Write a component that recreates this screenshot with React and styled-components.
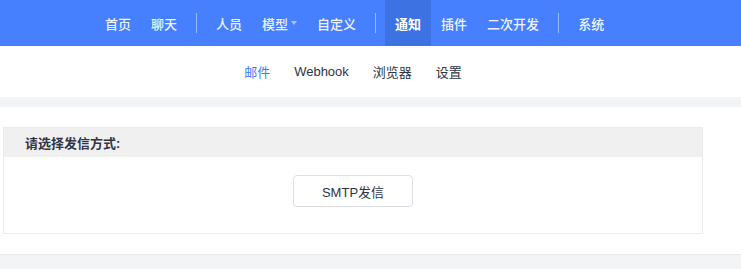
import React from "react";
import styled, { createGlobalStyle } from "styled-components";

const Global = createGlobalStyle`
  html, body { margin: 0; padding: 0; background: #ffffff; }
  body {
    font-family: "Liberation Sans", "Noto Sans CJK SC", Arial, sans-serif;
    font-size: 13px;
    color: #303445;
  }
`;

const Header = styled.header`
  background: #4680fe;
  height: 46px;
`;

const Nav = styled.nav`
  width: 706px;
  height: 100%;
  display: flex;
  align-items: stretch;
  padding-left: 95px;
  box-sizing: border-box;
`;

const NavItem = styled.a`
  display: flex;
  align-items: center;
  padding: 0 10px;
  font-size: 13px;
  color: ${(p) => (p.$active ? "#ffffff" : "rgba(255,255,255,0.93)")};
  font-weight: ${(p) => (p.$active ? 700 : 500)};
  background: ${(p) => (p.$active ? "#3c72e2" : "transparent")};
  cursor: pointer;
  white-space: nowrap;
`;

const Caret = styled.span`
  display: inline-block;
  width: 0;
  height: 0;
  margin-left: 3px;
  border-left: 3.5px solid transparent;
  border-right: 3.5px solid transparent;
  border-top: 4px solid rgba(255, 255, 255, 0.55);
`;

const Divider = styled.span`
  align-self: center;
  width: 1px;
  height: 20px;
  margin: 0 9px 1px 9px;
  background: rgba(255, 255, 255, 0.45);
`;

const SubNav = styled.div`
  width: 706px;
  height: 51px;
  display: flex;
  align-items: center;
  justify-content: center;
  gap: 24px;
`;

const SubItem = styled.a`
  font-size: 13px;
  color: ${(p) => (p.$active ? "#3f7cf4" : "#303445")};
  cursor: pointer;
`;

const Band = styled.div`
  height: ${(p) => p.$h}px;
  background: #f3f4f6;
  border-top: ${(p) => (p.$line ? "1px solid #e6e7ea" : "none")};
`;

const Content = styled.main`
  padding: 20px 0 20px 3px;
`;

const Card = styled.section`
  width: 700px;
  box-sizing: border-box;
  border: 1px solid #ebebeb;
`;

const CardHead = styled.div`
  height: 29px;
  background: #f0f0f0;
  display: flex;
  align-items: center;
  padding-left: 21px;
  font-weight: 700;
  font-size: 13px;
  color: #303445;
`;

const CardBody = styled.div`
  display: flex;
  justify-content: center;
  padding: 18px 0 26px;
`;

const Button = styled.button`
  width: 120px;
  height: 32px;
  border: 1px solid #dcdfe6;
  border-radius: 4px;
  background: #fff;
  font-family: inherit;
  font-size: 13px;
  color: #303445;
  cursor: pointer;
`;

export default function App() {
  return (
    <>
      <Global />
      <Header>
        <Nav>
          <NavItem>首页</NavItem>
          <NavItem>聊天</NavItem>
          <Divider />
          <NavItem>人员</NavItem>
          <NavItem>
            模型
            <Caret />
          </NavItem>
          <NavItem>自定义</NavItem>
          <Divider />
          <NavItem $active>通知</NavItem>
          <NavItem>插件</NavItem>
          <NavItem>二次开发</NavItem>
          <Divider />
          <NavItem>系统</NavItem>
        </Nav>
      </Header>
      <SubNav>
        <SubItem $active>邮件</SubItem>
        <SubItem>Webhook</SubItem>
        <SubItem>浏览器</SubItem>
        <SubItem>设置</SubItem>
      </SubNav>
      <Band $h={10} />
      <Content>
        <Card>
          <CardHead>请选择发信方式:</CardHead>
          <CardBody>
            <Button>SMTP发信</Button>
          </CardBody>
        </Card>
      </Content>
      <Band $h={20} $line />
    </>
  );
}
